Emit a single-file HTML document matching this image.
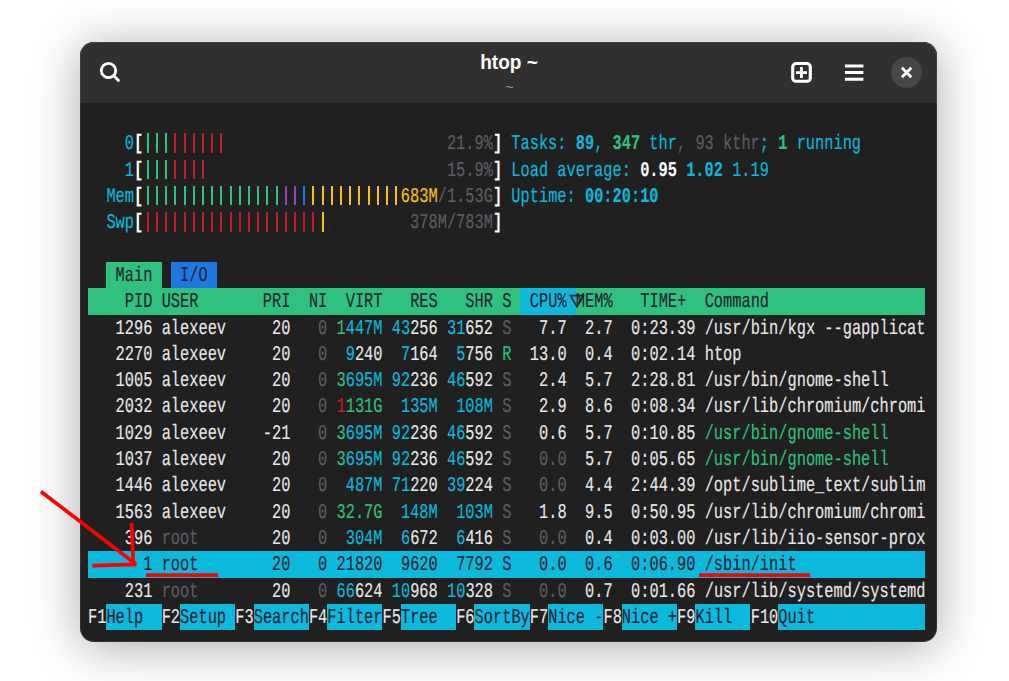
<!DOCTYPE html>
<html><head><meta charset="utf-8"><style>
html,body{margin:0;padding:0;width:1009px;height:681px;overflow:hidden;background:#ffffff;}
.abs{position:absolute;}
#win{position:absolute;left:80px;top:42px;width:857px;height:600px;border-radius:14px;background:#202020;
 overflow:hidden;}
#shd{position:absolute;left:83px;top:45px;width:851px;height:594px;border-radius:12px;background:#202020;box-shadow:0 5px 48px 3px rgba(0,0,0,0.34);}
#hb{position:absolute;left:0;top:0;width:857px;height:60.7px;background:#303030;}
#title{position:absolute;left:509px;top:50px;white-space:pre;font:bold 21px "Liberation Sans",sans-serif;color:#fff;transform:translateX(-50%) scaleX(0.905);}
#sub{position:absolute;left:509.5px;top:79px;white-space:pre;font:14px "Liberation Sans",sans-serif;color:#9a9a9a;transform:translateX(-50%);}
.r{position:absolute;left:88.0px;height:26.32px;line-height:26.32px;white-space:pre;font-family:"Liberation Mono",monospace;font-size:21px;
 transform:scaleX(0.73016);transform-origin:0 0;color:#e8e8e8;-webkit-text-stroke:0.15px currentColor;text-rendering:geometricPrecision;}
.b{position:absolute;}
</style></head><body>
<div id="shd"></div><div id="win"><div id="hb"></div></div>
<div id="title">htop ~</div>
<div id="sub">~</div>
<svg class="abs" style="left:96px;top:57px" width="28" height="28" viewBox="0 0 28 28">
 <circle cx="12.5" cy="13.5" r="7.2" fill="none" stroke="#fff" stroke-width="2.8"/>
 <path d="M17.6 18.6 L22.4 23.4" stroke="#fff" stroke-width="2.8" stroke-linecap="round"/>
</svg>
<svg class="abs" style="left:788px;top:59px" width="27" height="27" viewBox="0 0 27 27">
 <rect x="4.7" y="4.5" width="17.6" height="17.8" rx="3.4" fill="none" stroke="#fff" stroke-width="3.1"/>
 <path d="M8 13.6 H19 M13.4 8.1 V19.1" stroke="#fff" stroke-width="2.9"/>
</svg>
<svg class="abs" style="left:840px;top:60px" width="28" height="26" viewBox="0 0 28 26">
 <path d="M4.9 5.9 H23.4 M4.9 12.6 H23.4 M4.9 19.2 H23.4" stroke="#fff" stroke-width="3"/>
</svg>
<div class="abs" style="left:891px;top:57px;width:31px;height:31px;border-radius:50%;background:#474747"></div>
<svg class="abs" style="left:891px;top:57px" width="31" height="31" viewBox="0 0 31 31">
 <path d="M10.9 10.8 L20.3 20.2 M20.3 10.8 L10.9 20.2" stroke="#fff" stroke-width="2.8"/>
</svg>
<div class="b" style="left:106.40px;top:261.88px;width:55.20px;height:26.32px;background:#2ec27e"></div><div class="b" style="left:170.80px;top:261.88px;width:46.00px;height:26.32px;background:#1e78e4"></div><div class="b" style="left:88.00px;top:288.20px;width:837.20px;height:26.32px;background:#2ec27e"></div><div class="b" style="left:520.40px;top:288.20px;width:55.20px;height:26.32px;background:#0ab9dc"></div><div class="b" style="left:88.00px;top:551.40px;width:837.20px;height:26.32px;background:#0ab9dc"></div><div class="b" style="left:106.40px;top:604.04px;width:55.20px;height:26.32px;background:#0ab9dc"></div><div class="b" style="left:180.00px;top:604.04px;width:55.20px;height:26.32px;background:#0ab9dc"></div><div class="b" style="left:253.60px;top:604.04px;width:55.20px;height:26.32px;background:#0ab9dc"></div><div class="b" style="left:327.20px;top:604.04px;width:55.20px;height:26.32px;background:#0ab9dc"></div><div class="b" style="left:400.80px;top:604.04px;width:55.20px;height:26.32px;background:#0ab9dc"></div><div class="b" style="left:474.40px;top:604.04px;width:55.20px;height:26.32px;background:#0ab9dc"></div><div class="b" style="left:548.00px;top:604.04px;width:55.20px;height:26.32px;background:#0ab9dc"></div><div class="b" style="left:621.60px;top:604.04px;width:55.20px;height:26.32px;background:#0ab9dc"></div><div class="b" style="left:695.20px;top:604.04px;width:55.20px;height:26.32px;background:#0ab9dc"></div><div class="b" style="left:778.00px;top:604.04px;width:147.20px;height:26.32px;background:#0ab9dc"></div>
<div class="b" style="left:146.70px;top:133.38px;width:2.20px;height:19.30px;background:#2ec27e"></div><div class="b" style="left:155.90px;top:133.38px;width:2.20px;height:19.30px;background:#2ec27e"></div><div class="b" style="left:165.10px;top:133.38px;width:2.20px;height:19.30px;background:#2ec27e"></div><div class="b" style="left:174.30px;top:133.38px;width:2.20px;height:19.30px;background:#c01c28"></div><div class="b" style="left:183.50px;top:133.38px;width:2.20px;height:19.30px;background:#c01c28"></div><div class="b" style="left:192.70px;top:133.38px;width:2.20px;height:19.30px;background:#c01c28"></div><div class="b" style="left:201.90px;top:133.38px;width:2.20px;height:19.30px;background:#c01c28"></div><div class="b" style="left:211.10px;top:133.38px;width:2.20px;height:19.30px;background:#c01c28"></div><div class="b" style="left:220.30px;top:133.38px;width:2.20px;height:19.30px;background:#c01c28"></div><div class="b" style="left:146.70px;top:159.70px;width:2.20px;height:19.30px;background:#2ec27e"></div><div class="b" style="left:155.90px;top:159.70px;width:2.20px;height:19.30px;background:#2ec27e"></div><div class="b" style="left:165.10px;top:159.70px;width:2.20px;height:19.30px;background:#2ec27e"></div><div class="b" style="left:174.30px;top:159.70px;width:2.20px;height:19.30px;background:#c01c28"></div><div class="b" style="left:183.50px;top:159.70px;width:2.20px;height:19.30px;background:#c01c28"></div><div class="b" style="left:192.70px;top:159.70px;width:2.20px;height:19.30px;background:#c01c28"></div><div class="b" style="left:201.90px;top:159.70px;width:2.20px;height:19.30px;background:#c01c28"></div><div class="b" style="left:146.70px;top:186.02px;width:2.20px;height:19.30px;background:#2ec27e"></div><div class="b" style="left:155.90px;top:186.02px;width:2.20px;height:19.30px;background:#2ec27e"></div><div class="b" style="left:165.10px;top:186.02px;width:2.20px;height:19.30px;background:#2ec27e"></div><div class="b" style="left:174.30px;top:186.02px;width:2.20px;height:19.30px;background:#2ec27e"></div><div class="b" style="left:183.50px;top:186.02px;width:2.20px;height:19.30px;background:#2ec27e"></div><div class="b" style="left:192.70px;top:186.02px;width:2.20px;height:19.30px;background:#2ec27e"></div><div class="b" style="left:201.90px;top:186.02px;width:2.20px;height:19.30px;background:#2ec27e"></div><div class="b" style="left:211.10px;top:186.02px;width:2.20px;height:19.30px;background:#2ec27e"></div><div class="b" style="left:220.30px;top:186.02px;width:2.20px;height:19.30px;background:#2ec27e"></div><div class="b" style="left:229.50px;top:186.02px;width:2.20px;height:19.30px;background:#2ec27e"></div><div class="b" style="left:238.70px;top:186.02px;width:2.20px;height:19.30px;background:#2ec27e"></div><div class="b" style="left:247.90px;top:186.02px;width:2.20px;height:19.30px;background:#2ec27e"></div><div class="b" style="left:257.10px;top:186.02px;width:2.20px;height:19.30px;background:#2ec27e"></div><div class="b" style="left:266.30px;top:186.02px;width:2.20px;height:19.30px;background:#2ec27e"></div><div class="b" style="left:275.50px;top:186.02px;width:2.20px;height:19.30px;background:#2ec27e"></div><div class="b" style="left:284.70px;top:186.02px;width:2.20px;height:19.30px;background:#9841bb"></div><div class="b" style="left:293.90px;top:186.02px;width:2.20px;height:19.30px;background:#9841bb"></div><div class="b" style="left:303.10px;top:186.02px;width:2.20px;height:19.30px;background:#1e78e4"></div><div class="b" style="left:312.30px;top:186.02px;width:2.20px;height:19.30px;background:#f5c211"></div><div class="b" style="left:321.50px;top:186.02px;width:2.20px;height:19.30px;background:#f5c211"></div><div class="b" style="left:330.70px;top:186.02px;width:2.20px;height:19.30px;background:#f5c211"></div><div class="b" style="left:339.90px;top:186.02px;width:2.20px;height:19.30px;background:#f5c211"></div><div class="b" style="left:349.10px;top:186.02px;width:2.20px;height:19.30px;background:#f5c211"></div><div class="b" style="left:358.30px;top:186.02px;width:2.20px;height:19.30px;background:#f5c211"></div><div class="b" style="left:367.50px;top:186.02px;width:2.20px;height:19.30px;background:#f5c211"></div><div class="b" style="left:376.70px;top:186.02px;width:2.20px;height:19.30px;background:#f5c211"></div><div class="b" style="left:385.90px;top:186.02px;width:2.20px;height:19.30px;background:#f5c211"></div><div class="b" style="left:395.10px;top:186.02px;width:2.20px;height:19.30px;background:#f5c211"></div><div class="b" style="left:146.70px;top:212.34px;width:2.20px;height:19.30px;background:#c01c28"></div><div class="b" style="left:155.90px;top:212.34px;width:2.20px;height:19.30px;background:#c01c28"></div><div class="b" style="left:165.10px;top:212.34px;width:2.20px;height:19.30px;background:#c01c28"></div><div class="b" style="left:174.30px;top:212.34px;width:2.20px;height:19.30px;background:#c01c28"></div><div class="b" style="left:183.50px;top:212.34px;width:2.20px;height:19.30px;background:#c01c28"></div><div class="b" style="left:192.70px;top:212.34px;width:2.20px;height:19.30px;background:#c01c28"></div><div class="b" style="left:201.90px;top:212.34px;width:2.20px;height:19.30px;background:#c01c28"></div><div class="b" style="left:211.10px;top:212.34px;width:2.20px;height:19.30px;background:#c01c28"></div><div class="b" style="left:220.30px;top:212.34px;width:2.20px;height:19.30px;background:#c01c28"></div><div class="b" style="left:229.50px;top:212.34px;width:2.20px;height:19.30px;background:#c01c28"></div><div class="b" style="left:238.70px;top:212.34px;width:2.20px;height:19.30px;background:#c01c28"></div><div class="b" style="left:247.90px;top:212.34px;width:2.20px;height:19.30px;background:#c01c28"></div><div class="b" style="left:257.10px;top:212.34px;width:2.20px;height:19.30px;background:#c01c28"></div><div class="b" style="left:266.30px;top:212.34px;width:2.20px;height:19.30px;background:#c01c28"></div><div class="b" style="left:275.50px;top:212.34px;width:2.20px;height:19.30px;background:#c01c28"></div><div class="b" style="left:284.70px;top:212.34px;width:2.20px;height:19.30px;background:#c01c28"></div><div class="b" style="left:293.90px;top:212.34px;width:2.20px;height:19.30px;background:#c01c28"></div><div class="b" style="left:303.10px;top:212.34px;width:2.20px;height:19.30px;background:#c01c28"></div><div class="b" style="left:312.30px;top:212.34px;width:2.20px;height:19.30px;background:#c01c28"></div><div class="b" style="left:321.50px;top:212.34px;width:2.20px;height:19.30px;background:#f5c211"></div>
<div class="r" style="top:132.28px">    <span style="color:#0ab9dc">0</span><span style="color:#ffffff;font-weight:bold;-webkit-text-stroke:0.1px currentColor">[</span>                                 <span style="color:#5e5c64">21.9%</span><span style="color:#ffffff;font-weight:bold;-webkit-text-stroke:0.1px currentColor">]</span> <span style="color:#0ab9dc">Tasks: </span><span style="color:#0ab9dc;font-weight:bold;-webkit-text-stroke:0.1px currentColor">89</span><span style="color:#0ab9dc">, </span><span style="color:#2ec27e;font-weight:bold;-webkit-text-stroke:0.1px currentColor">347</span><span style="color:#0ab9dc"> thr</span><span style="color:#5e5c64">, </span><span style="color:#5e5c64">93 kthr</span><span style="color:#0ab9dc">; </span><span style="color:#2ec27e;font-weight:bold;-webkit-text-stroke:0.1px currentColor">1</span><span style="color:#0ab9dc"> running</span></div><div class="r" style="top:158.60px">    <span style="color:#0ab9dc">1</span><span style="color:#ffffff;font-weight:bold;-webkit-text-stroke:0.1px currentColor">[</span>                                 <span style="color:#5e5c64">15.9%</span><span style="color:#ffffff;font-weight:bold;-webkit-text-stroke:0.1px currentColor">]</span> <span style="color:#0ab9dc">Load average: </span><span style="color:#ffffff;font-weight:bold;-webkit-text-stroke:0.1px currentColor">0.95 </span><span style="color:#0ab9dc;font-weight:bold;-webkit-text-stroke:0.1px currentColor">1.02 </span><span style="color:#0ab9dc">1.19</span></div><div class="r" style="top:184.92px">  <span style="color:#0ab9dc">Mem</span><span style="color:#ffffff;font-weight:bold;-webkit-text-stroke:0.1px currentColor">[</span>                            <span style="color:#f5c211">683M</span><span style="color:#5e5c64">/1.53G</span><span style="color:#ffffff;font-weight:bold;-webkit-text-stroke:0.1px currentColor">]</span> <span style="color:#0ab9dc">Uptime: </span><span style="color:#0ab9dc;font-weight:bold;-webkit-text-stroke:0.1px currentColor">00:20:10</span></div><div class="r" style="top:211.24px">  <span style="color:#0ab9dc">Swp</span><span style="color:#ffffff;font-weight:bold;-webkit-text-stroke:0.1px currentColor">[</span>                             <span style="color:#5e5c64">378M/783M</span><span style="color:#ffffff;font-weight:bold;-webkit-text-stroke:0.1px currentColor">]</span></div><div class="r" style="top:263.88px">   <span style="color:#241f31">Main</span>   <span style="color:#241f31">I/O</span></div><div class="r" style="top:290.20px">    <span style="color:#241f31">PID</span> <span style="color:#241f31">USER</span>       <span style="color:#241f31">PRI</span>  <span style="color:#241f31">NI</span>  <span style="color:#241f31">VIRT</span>   <span style="color:#241f31">RES</span>   <span style="color:#241f31">SHR</span> <span style="color:#241f31">S</span>  <span style="color:#241f31">CPU%</span> <span style="color:#241f31">MEM%</span>   <span style="color:#241f31">TIME+</span>  <span style="color:#241f31">Command</span></div><div class="r" style="top:316.52px">   <span style="color:#e8e8e8">1296</span> <span style="color:#e8e8e8">alexeev</span>     <span style="color:#e8e8e8">20</span>   <span style="color:#5e5c64">0</span> <span style="color:#2ec27e">1</span><span style="color:#0ab9dc">447M</span> <span style="color:#0ab9dc">43</span><span style="color:#e8e8e8">256</span> <span style="color:#0ab9dc">31</span><span style="color:#e8e8e8">652</span> <span style="color:#5e5c64">S</span>   <span style="color:#e8e8e8">7.7</span>  <span style="color:#e8e8e8">2.7</span>  <span style="color:#e8e8e8">0:23.39</span> <span style="color:#e8e8e8">/usr/bin/kgx --gapplicat</span></div><div class="r" style="top:342.84px">   <span style="color:#e8e8e8">2270</span> <span style="color:#e8e8e8">alexeev</span>     <span style="color:#e8e8e8">20</span>   <span style="color:#5e5c64">0</span>  <span style="color:#0ab9dc">9</span><span style="color:#e8e8e8">240</span>  <span style="color:#0ab9dc">7</span><span style="color:#e8e8e8">164</span>  <span style="color:#0ab9dc">5</span><span style="color:#e8e8e8">756</span> <span style="color:#2ec27e">R</span>  <span style="color:#e8e8e8">13.0</span>  <span style="color:#e8e8e8">0.4</span>  <span style="color:#e8e8e8">0:02.14</span> <span style="color:#e8e8e8">htop</span></div><div class="r" style="top:369.16px">   <span style="color:#e8e8e8">1005</span> <span style="color:#e8e8e8">alexeev</span>     <span style="color:#e8e8e8">20</span>   <span style="color:#5e5c64">0</span> <span style="color:#2ec27e">3</span><span style="color:#0ab9dc">695M</span> <span style="color:#0ab9dc">92</span><span style="color:#e8e8e8">236</span> <span style="color:#0ab9dc">46</span><span style="color:#e8e8e8">592</span> <span style="color:#5e5c64">S</span>   <span style="color:#e8e8e8">2.4</span>  <span style="color:#e8e8e8">5.7</span>  <span style="color:#e8e8e8">2:28.81</span> <span style="color:#e8e8e8">/usr/bin/gnome-shell</span></div><div class="r" style="top:395.48px">   <span style="color:#e8e8e8">2032</span> <span style="color:#e8e8e8">alexeev</span>     <span style="color:#e8e8e8">20</span>   <span style="color:#5e5c64">0</span> <span style="color:#c01c28">1</span><span style="color:#2ec27e">131G</span>  <span style="color:#0ab9dc">135M</span>  <span style="color:#0ab9dc">108M</span> <span style="color:#5e5c64">S</span>   <span style="color:#e8e8e8">2.9</span>  <span style="color:#e8e8e8">8.6</span>  <span style="color:#e8e8e8">0:08.34</span> <span style="color:#e8e8e8">/usr/lib/chromium/chromi</span></div><div class="r" style="top:421.80px">   <span style="color:#e8e8e8">1029</span> <span style="color:#e8e8e8">alexeev</span>    <span style="color:#e8e8e8">-21</span>   <span style="color:#5e5c64">0</span> <span style="color:#2ec27e">3</span><span style="color:#0ab9dc">695M</span> <span style="color:#0ab9dc">92</span><span style="color:#e8e8e8">236</span> <span style="color:#0ab9dc">46</span><span style="color:#e8e8e8">592</span> <span style="color:#5e5c64">S</span>   <span style="color:#e8e8e8">0.6</span>  <span style="color:#e8e8e8">5.7</span>  <span style="color:#e8e8e8">0:10.85</span> <span style="color:#2ec27e">/usr/bin/gnome-shell</span></div><div class="r" style="top:448.12px">   <span style="color:#e8e8e8">1037</span> <span style="color:#e8e8e8">alexeev</span>     <span style="color:#e8e8e8">20</span>   <span style="color:#5e5c64">0</span> <span style="color:#2ec27e">3</span><span style="color:#0ab9dc">695M</span> <span style="color:#0ab9dc">92</span><span style="color:#e8e8e8">236</span> <span style="color:#0ab9dc">46</span><span style="color:#e8e8e8">592</span> <span style="color:#5e5c64">S</span>   <span style="color:#5e5c64">0.0</span>  <span style="color:#e8e8e8">5.7</span>  <span style="color:#e8e8e8">0:05.65</span> <span style="color:#2ec27e">/usr/bin/gnome-shell</span></div><div class="r" style="top:474.44px">   <span style="color:#e8e8e8">1446</span> <span style="color:#e8e8e8">alexeev</span>     <span style="color:#e8e8e8">20</span>   <span style="color:#5e5c64">0</span>  <span style="color:#0ab9dc">487M</span> <span style="color:#0ab9dc">71</span><span style="color:#e8e8e8">220</span> <span style="color:#0ab9dc">39</span><span style="color:#e8e8e8">224</span> <span style="color:#5e5c64">S</span>   <span style="color:#5e5c64">0.0</span>  <span style="color:#e8e8e8">4.4</span>  <span style="color:#e8e8e8">2:44.39</span> <span style="color:#e8e8e8">/opt/sublime_text/sublim</span></div><div class="r" style="top:500.76px">   <span style="color:#e8e8e8">1563</span> <span style="color:#e8e8e8">alexeev</span>     <span style="color:#e8e8e8">20</span>   <span style="color:#5e5c64">0</span> <span style="color:#2ec27e">32.7G</span>  <span style="color:#0ab9dc">148M</span>  <span style="color:#0ab9dc">103M</span> <span style="color:#5e5c64">S</span>   <span style="color:#e8e8e8">1.8</span>  <span style="color:#e8e8e8">9.5</span>  <span style="color:#e8e8e8">0:50.95</span> <span style="color:#e8e8e8">/usr/lib/chromium/chromi</span></div><div class="r" style="top:527.08px">    <span style="color:#e8e8e8">396</span> <span style="color:#5e5c64">root</span>        <span style="color:#e8e8e8">20</span>   <span style="color:#5e5c64">0</span>  <span style="color:#0ab9dc">304M</span>  <span style="color:#0ab9dc">6</span><span style="color:#e8e8e8">672</span>  <span style="color:#0ab9dc">6</span><span style="color:#e8e8e8">416</span> <span style="color:#5e5c64">S</span>   <span style="color:#5e5c64">0.0</span>  <span style="color:#e8e8e8">0.4</span>  <span style="color:#e8e8e8">0:03.00</span> <span style="color:#e8e8e8">/usr/lib/iio-sensor-prox</span></div><div class="r" style="top:553.40px">      <span style="color:#241f31">1</span> <span style="color:#241f31">root</span>        <span style="color:#241f31">20</span>   <span style="color:#241f31">0</span> <span style="color:#241f31">21820</span>  <span style="color:#241f31">9620</span>  <span style="color:#241f31">7792</span> <span style="color:#241f31">S</span>   <span style="color:#241f31">0.0</span>  <span style="color:#241f31">0.6</span>  <span style="color:#241f31">0:06.90</span> <span style="color:#241f31">/sbin/init</span></div><div class="r" style="top:579.72px">    <span style="color:#e8e8e8">231</span> <span style="color:#5e5c64">root</span>        <span style="color:#e8e8e8">20</span>   <span style="color:#5e5c64">0</span> <span style="color:#0ab9dc">66</span><span style="color:#e8e8e8">624</span> <span style="color:#0ab9dc">10</span><span style="color:#e8e8e8">968</span> <span style="color:#0ab9dc">10</span><span style="color:#e8e8e8">328</span> <span style="color:#5e5c64">S</span>   <span style="color:#5e5c64">0.0</span>  <span style="color:#e8e8e8">0.7</span>  <span style="color:#e8e8e8">0:01.66</span> <span style="color:#e8e8e8">/usr/lib/systemd/systemd</span></div><div class="r" style="top:606.04px"><span style="color:#e8e8e8">F1</span><span style="color:#241f31">Help  </span><span style="color:#e8e8e8">F2</span><span style="color:#241f31">Setup </span><span style="color:#e8e8e8">F3</span><span style="color:#241f31">Search</span><span style="color:#e8e8e8">F4</span><span style="color:#241f31">Filter</span><span style="color:#e8e8e8">F5</span><span style="color:#241f31">Tree  </span><span style="color:#e8e8e8">F6</span><span style="color:#241f31">SortBy</span><span style="color:#e8e8e8">F7</span><span style="color:#241f31">Nice -</span><span style="color:#e8e8e8">F8</span><span style="color:#241f31">Nice +</span><span style="color:#e8e8e8">F9</span><span style="color:#241f31">Kill  </span><span style="color:#e8e8e8">F10</span><span style="color:#241f31">Quit</span></div>
<svg class="abs" style="left:569.0px;top:294.0px" width="16" height="14" viewBox="0 0 16 14"><path d="M1.5 1.6 H14.2 L7.85 12.6 Z" fill="none" stroke="#241f31" stroke-width="1.8" stroke-linejoin="miter"/></svg>
<div class="abs" style="left:80px;top:42px;width:855px;height:598px;border:1px solid rgba(255,255,255,0.09);border-radius:14px"></div>
<svg class="abs" style="left:0;top:0" width="1009" height="681">
 <g stroke="#ff0000" stroke-width="3.7" fill="none" stroke-linecap="butt">
  <path d="M40.9 491.5 L136 564.2"/>
  <path d="M131.6 523 L133.4 566"/>
  <path d="M92.4 565.6 L136.5 564.4"/>
  <path d="M146 575.1 H218"/>
  <path d="M699 575.1 H810"/>
 </g>
</svg>
</body></html>
